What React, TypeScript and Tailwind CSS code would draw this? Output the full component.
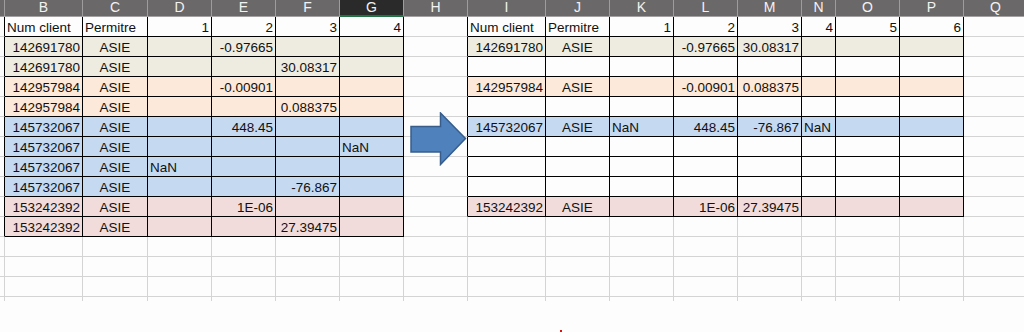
import React from 'react';

type Align = 'l' | 'r' | 'c';
type Cell = { text?: string; align?: Align; fill?: string };

const cols = [
  { key: '', w: 'w-[5px]' },
  { key: 'B', w: 'w-[78px]' },
  { key: 'C', w: 'w-[65px]' },
  { key: 'D', w: 'w-[64px]' },
  { key: 'E', w: 'w-[64px]' },
  { key: 'F', w: 'w-[64px]' },
  { key: 'G', w: 'w-[64px]' },
  { key: 'H', w: 'w-[64px]' },
  { key: 'I', w: 'w-[78px]' },
  { key: 'J', w: 'w-[64px]' },
  { key: 'K', w: 'w-[64px]' },
  { key: 'L', w: 'w-[64px]' },
  { key: 'M', w: 'w-[64px]' },
  { key: 'N', w: 'w-[34px]' },
  { key: 'O', w: 'w-[64px]' },
  { key: 'P', w: 'w-[64px]' },
  { key: 'Q', w: 'w-[64px]' },
];

const ROWS = 14;
const TAN = 'bg-[#eeece1]';
const ORANGE = 'bg-[#fde9d9]';
const BLUE = 'bg-[#c5d9f1]';
const PINK = 'bg-[#f2dcdb]';

const grid: Cell[][] = Array.from({ length: ROWS + 1 }, () => cols.map(() => ({})));

// header row of a table
const header = (c0: number, nums: number) => {
  grid[1][c0] = { text: 'Num client', align: 'l' };
  grid[1][c0 + 1] = { text: 'Permitre', align: 'l' };
  for (let i = 1; i <= nums; i++) grid[1][c0 + 1 + i] = { text: String(i), align: 'r' };
};

// data row: id, ASIE, then values (null = empty)
const put = (r: number, c0: number, span: number, fill: string, id: string | null, vals: (string | null)[]) => {
  for (let i = 0; i < span; i++) grid[r][c0 + i] = { fill };
  if (id) {
    grid[r][c0] = { text: id, align: 'r', fill };
    grid[r][c0 + 1] = { text: 'ASIE', align: 'c', fill };
  }
  vals.forEach((v, i) => {
    if (v) grid[r][c0 + 2 + i] = { text: v, align: v === 'NaN' ? 'l' : 'r', fill };
  });
};

header(1, 4);
put(2, 1, 6, TAN, '142691780', [null, '-0.97665', null, null]);
put(3, 1, 6, TAN, '142691780', [null, null, '30.08317', null]);
put(4, 1, 6, ORANGE, '142957984', [null, '-0.00901', null, null]);
put(5, 1, 6, ORANGE, '142957984', [null, null, '0.088375', null]);
put(6, 1, 6, BLUE, '145732067', [null, '448.45', null, null]);
put(7, 1, 6, BLUE, '145732067', [null, null, null, 'NaN']);
put(8, 1, 6, BLUE, '145732067', ['NaN', null, null, null]);
put(9, 1, 6, BLUE, '145732067', [null, null, '-76.867', null]);
put(10, 1, 6, PINK, '153242392', [null, '1E-06', null, null]);
put(11, 1, 6, PINK, '153242392', [null, null, '27.39475', null]);

header(8, 6);
put(2, 8, 8, TAN, '142691780', [null, '-0.97665', '30.08317']);
put(4, 8, 8, ORANGE, '142957984', [null, '-0.00901', '0.088375']);
put(6, 8, 8, BLUE, '145732067', ['NaN', '448.45', '-76.867', 'NaN']);
put(10, 8, 8, PINK, '153242392', [null, '1E-06', '27.39475']);

const inTable = (r: number, c: number) =>
  (c >= 1 && c <= 6 && r >= 1 && r <= 11) || (c >= 8 && c <= 15 && r >= 1 && r <= 10);

const alignCls: Record<Align, string> = {
  l: 'text-left pl-[2px]',
  r: 'text-right pr-[2px]',
  c: 'text-center',
};

const Arrow = () => (
  <svg className="absolute left-[410px] top-[112px]" width="57" height="54" viewBox="0 0 57 54">
    <path
      d="M1 14.5 H30.5 V1 L55.5 26.5 L30.5 52.5 V40 H1 Z"
      fill="#4f81bd"
      stroke="#385d8a"
      strokeWidth="1.5"
      strokeLinejoin="miter"
    />
  </svg>
);

export default function App() {
  return (
    <div className="relative w-[1024px] h-[332px] overflow-hidden bg-[#fcfdfc] font-['Liberation_Sans',Arial,sans-serif] text-[13.5px] text-[#111]">
      {/* column letters */}
      <div className="flex">
        {cols.map((col) => (
          <div
            key={col.key || 'A'}
            className={`${col.w} shrink-0 h-[17px] border-r border-r-[#9e9c9d] text-center text-[14px] leading-[15px] text-[#f2f2f2] ${
              col.key === 'G' ? 'bg-[#2a2a2a] border-b-2 border-b-[#217346]' : 'bg-[#6b6869] border-b border-b-[#a3a1a2]'
            }`}
          >
            {col.key}
          </div>
        ))}
      </div>

      {/* cells */}
      {grid.slice(1).map((row, ri) => {
        const r = ri + 1;
        return (
          <div key={r} className="flex">
            {row.map((cell, c) => {
              const right = inTable(r, c) || inTable(r, c + 1) ? 'border-r-black' : 'border-r-[#d4d4d4]';
              const bottom = inTable(r, c) || inTable(r + 1, c) ? 'border-b-black' : 'border-b-[#d4d4d4]';
              return (
                <div
                  key={c}
                  className={`${cols[c].w} shrink-0 h-[20px] border-r border-b ${right} ${bottom} ${
                    cell.fill ?? ''
                  } ${cell.align ? alignCls[cell.align] : ''} pt-[3px] leading-[16px] whitespace-nowrap overflow-hidden`}
                >
                  {cell.text}
                </div>
              );
            })}
          </div>
        );
      })}

      {/* cut-off last row */}
      <div className="flex">
        {cols.map((col, c) => (
          <div key={c} className={`${col.w} shrink-0 h-[4px] border-r border-r-[#d4d4d4]`} />
        ))}
      </div>

      <Arrow />
      <span className="absolute left-[560px] top-[330px] w-[2px] h-[2px] bg-[#e01010]" />
    </div>
  );
}
